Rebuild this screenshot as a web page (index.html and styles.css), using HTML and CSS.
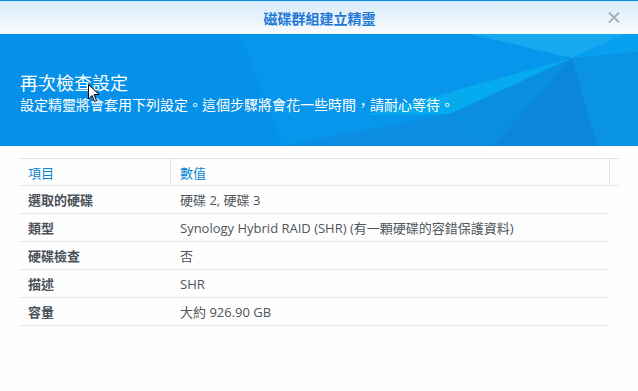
FILE: index.html
```html
<!DOCTYPE html>
<html lang="zh-Hant">
<head>
  <meta charset="UTF-8">
  <title>磁碟群組建立精靈</title>
  <link rel="stylesheet" href="styles.css">
</head>
<body>
  <div class="window">
    <div class="titlebar">
      <span class="title">磁碟群組建立精靈</span>
      <svg class="close" width="12" height="11" viewBox="0 0 12 11">
        <path d="M1 0.5 L11 10.5 M11 0.5 L1 10.5" stroke="#a3abb3" stroke-width="1.8" fill="none"/>
      </svg>
    </div>

    <div class="banner">
      <svg class="facets" width="638" height="112" viewBox="0 0 638 112">
        <polygon points="240,0 470,0 572,24 450,80 283,112" fill="#0796ec"/>
        <polygon points="470,0 625,0 572,24" fill="#17a8f0"/>
        <polygon points="625,0 638,0 638,18 572,24" fill="#07a0ee"/>
        <polygon points="367,81 450,80 572,24" fill="#06aaee"/>
        <polygon points="450,80 572,24 493,112" fill="#0a8fe0"/>
        <polygon points="572,24 597,112 493,112" fill="#0b86d8"/>
        <polygon points="572,24 638,18 638,112 597,112" fill="#0a93e2"/>
        <polygon points="283,112 450,80 493,112" fill="#0b8ee2"/>
      </svg>
      <h1>再次檢查設定</h1>
      <p>設定精靈將會套用下列設定。這個步驟將會花一些時間，請耐心等待。</p>
      <svg class="cursor" width="12" height="19" viewBox="0 0 12 19">
        <path d="M0.5 0.5 L0.5 15 L4 11.5 L6.5 17.5 L8.5 16.5 L6 10.5 L11 10.5 Z" fill="#fff" stroke="#000" stroke-width="1"/>
      </svg>
    </div>

    <div class="content">
      <div class="grid-head">
        <div class="cell">項目</div>
        <div class="cell">數值</div>
        <div class="cell"></div>
      </div>
      <div class="grid-row">
        <div class="cell label">選取的硬碟</div>
        <div class="cell">硬碟 2, 硬碟 3</div>
      </div>
      <div class="grid-row">
        <div class="cell label">類型</div>
        <div class="cell">Synology Hybrid RAID (SHR) (有一顆硬碟的容錯保護資料)</div>
      </div>
      <div class="grid-row">
        <div class="cell label">硬碟檢查</div>
        <div class="cell">否</div>
      </div>
      <div class="grid-row">
        <div class="cell label">描述</div>
        <div class="cell">SHR</div>
      </div>
      <div class="grid-row">
        <div class="cell label">容量</div>
        <div class="cell">大約 926.90 GB</div>
      </div>
    </div>
  </div>
</body>
</html>
```

FILE: styles.css
```css
:root {
  --blue: #0590ea;
  --head-text: #0a84d6;
  --text: #4e555c;
  --line: #e6e8eb;
  --head-line: #d8e3ee;
}

body {
  margin: 0;
  background: #fff;
  font-family: "Open Sans", "Noto Sans CJK TC", sans-serif;
  color: var(--text);
}

.window {
  width: 638px;
  height: 391px;
  overflow: hidden;
  background: #fefefe;
}

.titlebar {
  height: 33px;
  border-top: 1px solid #0a8ae6;
  background: linear-gradient(#d9ebfa, #f7fbfe);
  display: flex;
  align-items: center;
  justify-content: center;
  position: relative;
}

.title {
  font-family: "Noto Sans CJK TC", sans-serif;
  font-size: 14px;
  font-weight: bold;
  color: #1f78d6;
  margin-left: 1px;
}

.close {
  position: absolute;
  right: 18px;
  top: 11px;
}

.banner {
  position: relative;
  height: 112px;
  background: var(--blue);
  color: #fff;
  padding: 37px 0 0 20px;
  box-sizing: border-box;
  overflow: hidden;
}

.facets {
  position: absolute;
  left: 0;
  top: 0;
}

.banner h1 {
  position: relative;
  margin: 0;
  font-family: "Noto Sans CJK TC", serif;
  font-size: 18px;
  font-weight: normal;
  line-height: 22px;
}

.banner p {
  position: relative;
  margin: 2px 0 0;
  font-family: "Noto Sans CJK TC", sans-serif;
  font-size: 14px;
  line-height: 18px;
}

.cursor {
  position: absolute;
  left: 88px;
  top: 50px;
}

.content {
  padding: 12px 0 0 19px;
}

.grid-head,
.grid-row {
  display: grid;
  font-size: 13px;
}

.grid-head {
  width: 600px;
  grid-template-columns: 152px 448px 0;
  height: 26px;
  border-top: 1px solid var(--head-line);
  border-bottom: 1px solid var(--line);
  color: var(--head-text);
}

.grid-head .cell:nth-child(1),
.grid-head .cell:nth-child(2) {
  border-right: 1px solid var(--head-line);
}

.grid-head .cell:nth-child(2) {
  margin-right: 9px;
}

.grid-row {
  width: 590px;
  grid-template-columns: 152px 438px;
  height: 27px;
  border-bottom: 1px solid var(--line);
}

.cell {
  display: flex;
  align-items: center;
  padding-left: 9px;
  white-space: nowrap;
}

.grid-head .cell:nth-child(3) {
  padding: 0;
}

.label {
  font-weight: bold;
  color: #4a5058;
}
```
